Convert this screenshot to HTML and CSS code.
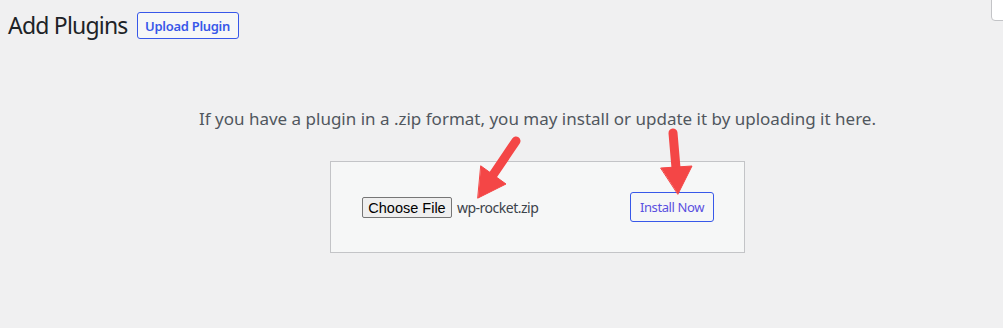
FILE: index.html
```html
<!DOCTYPE html>
<html>
<head>
<meta charset="utf-8">
<link rel="stylesheet" href="styles.css">
</head>
<body>
<div class="page">
  <div class="screen-tab"></div>
  <div class="wrap">
    <div class="header">
      <h1 class="title">Add Plugins</h1>
      <a class="upload-btn" href="#">Upload Plugin</a>
    </div>
    <div class="upload">
      <p class="help">If you have a plugin in a .zip format, you may install or update it by uploading it here.</p>
      <form class="box">
        <span class="file">
          <span class="choose">Choose File</span>
          <span class="fname">wp-rocket.zip</span>
        </span>
        <span class="install">Install Now</span>
      </form>
    </div>
  </div>
  <svg class="arrows" width="1003" height="328" viewBox="0 0 1003 328">
    <g fill="#f44646" stroke="#f44646" stroke-linecap="round" stroke-linejoin="round">
      <line x1="516" y1="141" x2="493" y2="175" stroke-width="9"/>
      <polygon points="481,166 506,184 478,198" stroke-width="1"/>
      <line x1="673" y1="133" x2="676" y2="168" stroke-width="9"/>
      <polygon points="661,168 692,166 678,194" stroke-width="1"/>
    </g>
  </svg>
</div>
</body>
</html>
```
FILE: styles.css
```css
html, body {
  margin: 0;
  padding: 0;
  background: #f0f0f1;
}
.page {
  position: relative;
  width: 1003px;
  height: 328px;
  overflow: hidden;
  font-family: "Noto Sans", "Open Sans", sans-serif;
  color: #3c434a;
}
.screen-tab {
  position: absolute;
  top: -1px;
  right: -4px;
  width: 14px;
  height: 20px;
  background: #fff;
  border: 1px solid #c3c4c7;
  border-bottom-left-radius: 4px;
}
.wrap {
  padding: 12px 0 0 8px;
}
.header {
  display: flex;
  align-items: center;
  gap: 9px;
  height: 27px;
}
.title {
  margin: 0;
  font-size: 23px;
  font-weight: 400;
  color: #1d2327;
  letter-spacing: -0.8px;
  line-height: 27px;
}
.upload-btn {
  display: flex;
  align-items: center;
  justify-content: center;
  box-sizing: border-box;
  width: 102px;
  height: 27px;
  border: 1px solid #3858e9;
  border-radius: 3px;
  background: #f6f7f7;
  color: #3858e9;
  font-size: 13px;
  font-weight: 600;
  text-decoration: none;
  letter-spacing: -0.3px;
}
.upload {
  display: flex;
  flex-direction: column;
  align-items: center;
  padding-top: 68px;
  padding-left: 64px;
  box-sizing: border-box;
  width: 995px;
}
.help {
  margin: 0;
  font-size: 17px;
  line-height: 24px;
  color: #50575e;
  letter-spacing: 0;
  white-space: nowrap;
}
.box {
  margin: 30px 0 0 0;
  box-sizing: border-box;
  width: 415px;
  height: 92px;
  border: 1px solid #c3c4c7;
  background: #f6f7f7;
  display: flex;
  align-items: center;
  justify-content: space-between;
  padding: 0 30px 0 31px;
}
.file {
  display: flex;
  align-items: center;
  gap: 5px;
  margin-top: 1px;
}
.choose {
  display: flex;
  align-items: center;
  justify-content: center;
  box-sizing: border-box;
  width: 90px;
  height: 21px;
  border: 1px solid #767676;
  border-radius: 2px;
  background: #efefef;
  font-family: "Liberation Sans", Arial, sans-serif;
  font-size: 14.5px;
  color: #000;
}
.fname {
  font-size: 14px;
  color: #3c434a;
  letter-spacing: -0.5px;
}
.install {
  display: flex;
  align-items: center;
  justify-content: center;
  box-sizing: border-box;
  width: 84px;
  height: 30px;
  border: 1px solid #3858e9;
  border-radius: 3px;
  background: #f6f7f7;
  color: #5a4fe0;
  font-size: 13px;
  letter-spacing: -0.4px;
}
.arrows {
  position: absolute;
  left: 0;
  top: 0;
  pointer-events: none;
}
```
